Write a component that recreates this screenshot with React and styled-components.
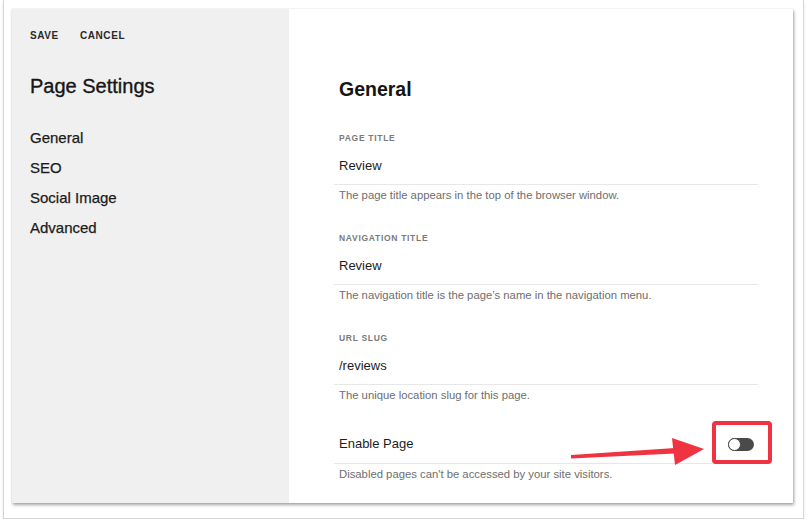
import React from "react"
import styled, { createGlobalStyle } from "styled-components"

const GlobalStyle = createGlobalStyle`
  html, body {
    margin: 0;
    padding: 0;
    background: #ffffff;
  }
  body {
    font-family: "Liberation Sans", Arial, sans-serif;
    color: #1b1b1b;
  }
`

const Frame = styled.div`
  box-sizing: border-box;
  width: 801px;
  height: 519px;
  margin-left: 3px;
  padding: 9px 10px 0 8px;
  border: 1px solid #d6d6d6;
  border-top: none;
  box-shadow: 0 2px 2px rgba(0, 0, 0, 0.12);
`

const Card = styled.div`
  position: relative;
  display: flex;
  width: 781px;
  height: 494px;
  background: #ffffff;
  box-shadow: 1px 2px 3px rgba(0, 0, 0, 0.35), 0 0 1px rgba(0, 0, 0, 0.2);
`

const Sidebar = styled.aside`
  box-sizing: border-box;
  width: 277px;
  padding: 21px 18px 0;
  background: #f0f0f0;
`

const Actions = styled.div`
  display: flex;
  gap: 21px;
`

const ActionButton = styled.span`
  font-size: 10px;
  line-height: 12px;
  font-weight: 700;
  letter-spacing: 0.6px;
  color: #2a2a2a;
`

const SidebarTitle = styled.h2`
  margin: 32px 0 0;
  font-size: 20px;
  line-height: 24px;
  font-weight: 400;
  color: #161616;
  -webkit-text-stroke: 0.35px #161616;
`

const NavList = styled.nav`
  display: flex;
  flex-direction: column;
  margin-top: 25px;
`

const NavItem = styled.a`
  font-size: 15px;
  line-height: 30px;
  color: #1b1b1b;
  text-decoration: none;
  -webkit-text-stroke: 0.25px #1b1b1b;
`

const Main = styled.main`
  flex: 1;
  padding: 68px 35px 0 45px;
`

const Heading = styled.h1`
  margin: 0 0 31px 5px;
  font-size: 19.5px;
  line-height: 24px;
  font-weight: 700;
  color: #141414;
`

const Field = styled.div`
  margin-bottom: 30px;
`

const Label = styled.div`
  padding-left: 5px;
  font-size: 8.5px;
  line-height: 12px;
  font-weight: 700;
  letter-spacing: 0.7px;
  color: #7a7a7a;
`

const ValueRow = styled.div`
  display: flex;
  align-items: center;
  justify-content: space-between;
  padding: ${(p) => (p.$compact ? "4px 4px 11px 5px" : "14px 5px 10px")};
  font-size: 13px;
  line-height: 16px;
  color: #1d1d1d;
  border-bottom: 1px solid #e7e7e7;
`

const Help = styled.div`
  margin-top: 3px;
  padding-left: 5px;
  font-size: 11.3px;
  line-height: 14px;
  color: #6e6e6e;
`

const Toggle = styled.span`
  position: relative;
  display: inline-block;
  width: 26px;
  height: 13px;
  border-radius: 7px;
  background: #4a4a4a;

  &::after {
    content: "";
    position: absolute;
    left: 0;
    top: 0;
    box-sizing: border-box;
    width: 13px;
    height: 13px;
    border-radius: 50%;
    background: #ffffff;
    border: 1.5px solid #4a4a4a;
  }
`

const Annotation = styled.svg`
  position: absolute;
  left: 555px;
  top: 410px;
  pointer-events: none;
`

const fields = [
  {
    label: "PAGE TITLE",
    value: "Review",
    help: "The page title appears in the top of the browser window.",
  },
  {
    label: "NAVIGATION TITLE",
    value: "Review",
    help: "The navigation title is the page\u2019s name in the navigation menu.",
  },
  {
    label: "URL SLUG",
    value: "/reviews",
    help: "The unique location slug for this page.",
  },
]

const App = () => {
  return (
    <>
      <GlobalStyle />
      <Frame>
        <Card>
          <Sidebar>
            <Actions>
              <ActionButton>SAVE</ActionButton>
              <ActionButton>CANCEL</ActionButton>
            </Actions>
            <SidebarTitle>Page Settings</SidebarTitle>
            <NavList>
              <NavItem>General</NavItem>
              <NavItem>SEO</NavItem>
              <NavItem>Social Image</NavItem>
              <NavItem>Advanced</NavItem>
            </NavList>
          </Sidebar>
          <Main>
            <Heading>General</Heading>
            {fields.map((f) => (
              <Field key={f.label}>
                <Label>{f.label}</Label>
                <ValueRow>{f.value}</ValueRow>
                <Help>{f.help}</Help>
              </Field>
            ))}
            <Field>
              <ValueRow $compact>
                <span>Enable Page</span>
                <Toggle />
              </ValueRow>
              <Help>Disabled pages can't be accessed by your site visitors.</Help>
            </Field>
          </Main>
          {/* red annotation: arrow + box around the toggle */}
          <Annotation width="220" height="60" viewBox="0 0 220 60">
            <polygon points="4,36 4,39.5 108,34.5 108,29" fill="#ef3340" />
            <polygon points="105,19 137,30 108,46" fill="#ef3340" />
            <rect x="147" y="4" width="56" height="39" rx="2" fill="none" stroke="#ef3340" strokeWidth="4" />
          </Annotation>
        </Card>
      </Frame>
    </>
  )
}

export default App
